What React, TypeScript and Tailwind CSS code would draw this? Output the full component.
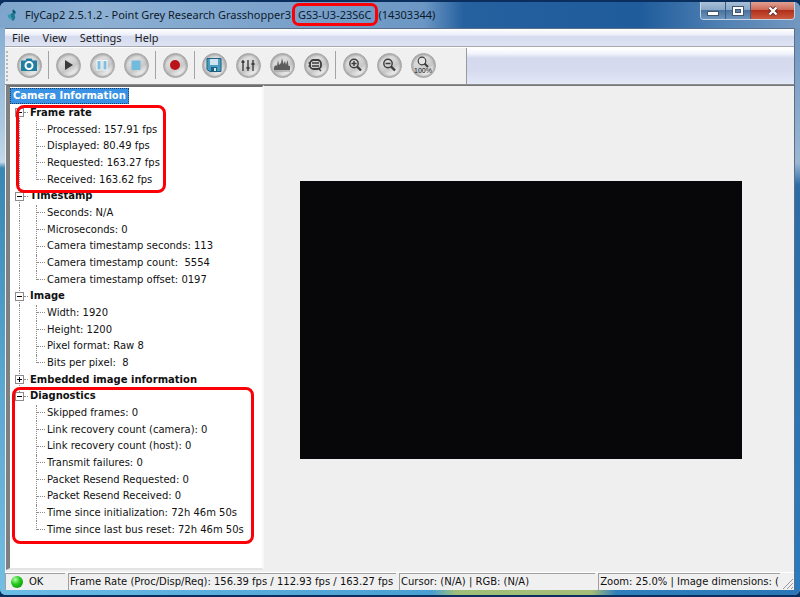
import type { ReactNode } from 'react';

interface TreeGroup {
  label: string;
  collapsed?: boolean;
  items: string[];
}

const groups: TreeGroup[] = [
  {
    label: 'Frame rate',
    items: ['Processed: 157.91 fps', 'Displayed: 80.49 fps', 'Requested: 163.27 fps', 'Received: 163.62 fps'],
  },
  {
    label: 'Timestamp',
    items: [
      'Seconds: N/A',
      'Microseconds: 0',
      'Camera timestamp seconds: 113',
      'Camera timestamp count:  5554',
      'Camera timestamp offset: 0197',
    ],
  },
  {
    label: 'Image',
    items: ['Width: 1920', 'Height: 1200', 'Pixel format: Raw 8', 'Bits per pixel:  8'],
  },
  { label: 'Embedded image information', collapsed: true, items: [] },
  {
    label: 'Diagnostics',
    items: [
      'Skipped frames: 0',
      'Link recovery count (camera): 0',
      'Link recovery count (host): 0',
      'Transmit failures: 0',
      'Packet Resend Requested: 0',
      'Packet Resend Received: 0',
      'Time since initialization: 72h 46m 50s',
      'Time since last bus reset: 72h 46m 50s',
    ],
  },
];

function TitleBar() {
  return (
    <header className="flex h-[26px] shrink-0 items-start bg-[linear-gradient(90deg,#7fa5cc_0%,#8db0d3_12%,#7ba2cb_35%,#6c97c4_53%,#25609f_58%,#1f5c9c_80%,#4f80b3_90%,#7398c0_100%)] pl-[7px]">
      <div className="flex h-[26px] flex-1 items-center gap-[8px]">
        <svg viewBox="0 0 12 16" className="h-4 w-[10px] shrink-0">
          <path d="M8 1 6 3 7 5 4 7 4 10 6 12 5 14 8 15 10 11 9 8 11 5Z" fill="#1d7890" />
          <path d="M1 7 4 8 5 12 3 13 1 10Z" fill="#2f9bb5" />
          <path d="M7 2 10 4 8 6Z" fill="#153f5c" />
        </svg>
        <h1 className="font-['Noto_Sans',sans-serif] text-[11px] leading-4 whitespace-pre text-[#0c1a2c]">
          FlyCap2 2.5.1.2 - Point Grey Research Grasshopper3{' '}
          <span className="relative px-1">
            GS3-U3-23S6C
            <span className="absolute -inset-x-[2px] -inset-y-1 rounded-[7px] border-3 border-[#fb0007]" />
          </span>
          {' (14303344)'}
        </h1>
      </div>
      <div className="mr-[5px] flex h-[18px] overflow-hidden rounded-b-[4px] border border-t-0 border-[#c3d3e4]">
        <button
          aria-label="Minimize"
          className="flex w-[25px] items-center justify-center border-r border-[#3c5a7d] bg-[linear-gradient(#a9bfd7_0%,#8aa8c8_45%,#4a739f_50%,#6c96bf_100%)]"
        >
          <svg viewBox="0 0 12 8" className="mt-1 h-2 w-3">
            <rect x="0.5" y="2.5" width="11" height="4" fill="#fff" stroke="#44566c" />
          </svg>
        </button>
        <button
          aria-label="Maximize"
          className="flex w-[25px] items-center justify-center border-r border-[#3c5a7d] bg-[linear-gradient(#a9bfd7_0%,#8aa8c8_45%,#4a739f_50%,#6c96bf_100%)]"
        >
          <svg viewBox="0 0 12 10" className="h-[10px] w-3">
            <rect x="0.5" y="0.5" width="11" height="9" fill="#fff" stroke="#44566c" />
            <rect x="3.5" y="3.5" width="5" height="3" fill="#5d82aa" stroke="#44566c" />
          </svg>
        </button>
        <button
          aria-label="Close"
          className="flex w-[43px] items-center justify-center bg-[linear-gradient(#e0a193_0%,#cf6b58_45%,#b0301b_50%,#cc5a3f_100%)]"
        >
          <svg viewBox="0 0 12 10" className="h-[10px] w-3">
            <path d="M2.5 1.5 9.5 8.5M9.5 1.5 2.5 8.5" stroke="#5a2a2a" strokeWidth="4" />
            <path d="M2.5 1.5 9.5 8.5M9.5 1.5 2.5 8.5" stroke="#fff" strokeWidth="2.4" />
          </svg>
        </button>
      </div>
    </header>
  );
}

function MenuBar() {
  return (
    <nav className="flex h-[17px] shrink-0 items-center gap-[13px] bg-[linear-gradient(#ffffff_0%,#eceffa_35%,#d5dbee_45%,#dfe4f4_100%)] pl-[7px]">
      {['File', 'View', 'Settings', 'Help'].map((name) => (
        <button key={name} className="font-['Noto_Sans',sans-serif] text-[11px] leading-4 text-[#1a1a1a]">
          {name}
        </button>
      ))}
    </nav>
  );
}

function ToolButton({ label, children }: { label: string; children: ReactNode }) {
  return (
    <button aria-label={label} className="flex w-[34px] items-center justify-center">
      <span className="flex size-[25px] items-center justify-center rounded-full border border-[#a2a2a2] bg-[linear-gradient(150deg,#b4b4b4_0%,#dedede_30%,#c8c8c8_60%,#f0f0f0_80%,#c4c4c4_100%)] shadow-[inset_0_0_2px_1px_#a4a4a4]">
        <svg viewBox="0 0 20 20" className="size-5">
          {children}
        </svg>
      </span>
    </button>
  );
}

function ToolSeparator() {
  return (
    <div className="flex w-[5px] justify-center py-[3px]">
      <div className="w-px bg-[#a3a3a3]" />
    </div>
  );
}

function ToolBar() {
  return (
    <div className="flex h-[36px] shrink-0 bg-[#f0f0f0]">
      <div className="my-[3px] ml-px w-[6px] border-l-2 border-dotted border-[#b9b9b9]" />
      <div className="flex w-[454px] shrink-0 pb-[2px]">
        <ToolButton label="Take picture">
          <path d="M2 5.5h4.5l1-2h5l1 2H18V16H2Z" fill="#1f7fa3" />
          <circle cx="10" cy="10.5" r="3.5" fill="#1f7fa3" stroke="#fff" strokeWidth="2" />
        </ToolButton>
        <ToolSeparator />
        <ToolButton label="Play">
          <path d="M7 5 15 10 7 15Z" fill="#3a3a3a" />
        </ToolButton>
        <ToolButton label="Pause">
          <rect x="5" y="5.5" width="4" height="9.5" fill="#7fbfdd" stroke="#f4fafd" />
          <rect x="11" y="5.5" width="4" height="9.5" fill="#7fbfdd" stroke="#f4fafd" />
        </ToolButton>
        <ToolButton label="Stop">
          <rect x="5.5" y="5.5" width="9" height="9.5" fill="#72bbdd" />
        </ToolButton>
        <ToolSeparator />
        <ToolButton label="Record">
          <circle cx="10" cy="10" r="5" fill="#b9141a" />
        </ToolButton>
        <ToolSeparator />
        <ToolButton label="Save">
          <path d="M3 3.5h14v13h-11l-3-2Z" fill="#4a9cc0" stroke="#1d6283" />
          <rect x="6" y="4" width="8" height="6" fill="#cfe4ee" />
          <rect x="7" y="12" width="6" height="4" fill="#1d6283" />
          <rect x="10" y="13" width="2" height="3" fill="#d8e8f0" />
        </ToolButton>
        <ToolButton label="Camera control">
          <path d="M5 5v11M10 5v11M15 5v11" stroke="#3c3c3c" strokeWidth="1.4" />
          <path d="M3.5 7h3M8.5 13h3M13.5 9h3" stroke="#3c3c3c" strokeWidth="2.2" />
        </ToolButton>
        <ToolButton label="Histogram">
          <path d="M2 15V12L4 10 5 11 6 5 7 10 9 8 10 3 11.5 9 13 6 14 10 15.5 5 16.5 11 18 11V15Z" fill="#5c5c5c" />
          <path d="M2 16h16" stroke="#999" />
        </ToolButton>
        <ToolButton label="Event log">
          <rect x="4" y="5" width="11" height="9" rx="3.5" fill="none" stroke="#3c3c3c" strokeWidth="1.8" />
          <path d="M6 8h7M6 11h7M2.5 8H5M2.5 11H5M12 13l3 3" stroke="#3c3c3c" strokeWidth="1.4" />
        </ToolButton>
        <ToolSeparator />
        <ToolButton label="Zoom in">
          <circle cx="9" cy="8.5" r="4.2" fill="none" stroke="#3c3c3c" strokeWidth="1.4" />
          <path d="M6.5 8.5h5M9 6v5" stroke="#3c3c3c" strokeWidth="1.4" />
          <path d="m12 11.5 4 4" stroke="#3c3c3c" strokeWidth="2.4" />
        </ToolButton>
        <ToolButton label="Zoom out">
          <circle cx="9" cy="8.5" r="4.2" fill="none" stroke="#3c3c3c" strokeWidth="1.4" />
          <path d="M6.5 8.5h5" stroke="#3c3c3c" strokeWidth="1.4" />
          <path d="m12 11.5 4 4" stroke="#3c3c3c" strokeWidth="2.4" />
        </ToolButton>
        <ToolButton label="Zoom to 100%">
          <circle cx="9" cy="6" r="3.8" fill="#e4e4e4" stroke="#3c3c3c" strokeWidth="1.2" />
          <path d="m11.5 8.5 3.5 3.5" stroke="#3c3c3c" strokeWidth="2" />
          <text x="10" y="18" textAnchor="middle" fontFamily="Liberation Sans, sans-serif" fontSize="7" fill="#222">
            100%
          </text>
        </ToolButton>
      </div>
      <div className="flex-1 border-l border-[#9a9a9a] bg-[linear-gradient(#ffffff_0%,#f3f5fc_15%,#d4d9ed_28%,#d6dbef_65%,#e3e8f8_100%)]" />
    </div>
  );
}

function GroupRow({ group, first, last }: { group: TreeGroup; first: boolean; last: boolean }) {
  return (
    <li className="flex items-center">
      <span className="relative flex h-full w-[20px] shrink-0 items-center pl-[9px]">
        <span
          className={`w-[9px] border-l border-dotted border-[#8c8c8c] ${first ? 'h-1/2 self-end' : last ? 'h-1/2 self-start' : 'h-full'}`}
        />
        <button
          aria-label={group.collapsed ? `Expand ${group.label}` : `Collapse ${group.label}`}
          className="absolute left-[5px] flex size-[9px] items-center justify-center border border-[#8c8c8c] bg-white"
        >
          <svg viewBox="0 0 7 7" className="size-[7px]" stroke="#000">
            <path d={group.collapsed ? 'M1 3.5h5M3.5 1v5' : 'M1 3.5h5'} />
          </svg>
        </button>
        <span className="absolute left-[14px] w-[4px] border-t border-dotted border-[#8c8c8c]" />
      </span>
      <span className="font-bold">{group.label}</span>
    </li>
  );
}

function ItemRow({ text, trunk, last }: { text: string; trunk: boolean; last: boolean }) {
  return (
    <li className="flex items-center">
      <span className={`ml-[9px] h-full w-[17px] shrink-0 ${trunk ? 'border-l border-dotted border-[#8c8c8c]' : ''}`} />
      <span
        className={`w-px shrink-0 border-l border-dotted border-[#8c8c8c] ${last ? 'h-1/2 self-start' : 'h-full'}`}
      />
      <span className="mr-[2px] w-[8px] shrink-0 border-t border-dotted border-[#8c8c8c]" />
      <span className="whitespace-pre">{text}</span>
    </li>
  );
}

function CameraTree() {
  return (
    <aside className="relative ml-px w-[258px] shrink-0 border-t-2 border-r-2 border-b-2 border-l-4 border-t-[#6f6f6f] border-r-[#f8f8f8] border-b-[#e4e4e4] border-l-[#7f7f7f] bg-white pt-px">
      <ul className="grid h-[450px] auto-rows-fr font-['DejaVu_Sans',sans-serif] text-[10px] leading-4 text-[#111]">
        <li className="flex items-center">
          <span className="border border-dotted border-[#1b3f66] bg-[#3992e3] px-[2px] leading-[14px] font-bold text-white">
            Camera Information
          </span>
        </li>
        {groups.map((group, g) => [
          <GroupRow key={group.label} group={group} first={g === 0} last={g === groups.length - 1} />,
          ...group.items.map((text, i) => (
            <ItemRow key={text} text={text} trunk={g < groups.length - 1} last={i === group.items.length - 1} />
          )),
        ])}
      </ul>
      {/* highlight frames */}
      <div className="absolute top-[18px] left-[6px] h-[88px] w-[150px] rounded-[8px] border-3 border-[#fb0007]" />
      <div className="absolute top-[300px] left-[2px] h-[157px] w-[242px] rounded-[8px] border-3 border-[#fb0007]" />
    </aside>
  );
}

function StatusPane({ className, children }: { className: string; children: ReactNode }) {
  return (
    <div
      className={`flex items-center overflow-hidden border-t border-l border-[#a0a0a0] whitespace-nowrap ${className}`}
    >
      {children}
    </div>
  );
}

function StatusBar() {
  return (
    <footer className="flex h-[17px] shrink-0 gap-[3px] bg-[#f0f0f0] font-['DejaVu_Sans',sans-serif] text-[10px] leading-4 text-[#111]">
      <StatusPane className="w-[60px] gap-[6px] pl-[5px]">
        <span className="size-[12px] rounded-full bg-[radial-gradient(circle_at_35%_30%,#b6ffab_0%,#27cc1e_40%,#0a7d0a_100%)]" />
        OK
      </StatusPane>
      <StatusPane className="w-[328px] pl-px">Frame Rate (Proc/Disp/Req): 156.39 fps / 112.93 fps / 163.27 fps</StatusPane>
      <StatusPane className="flex-1 pl-px">Cursor: (N/A) | RGB: (N/A)</StatusPane>
      <div className="flex">
        <StatusPane className="px-px">Zoom: 25.0% | Image dimensions: (</StatusPane>
        <svg viewBox="0 0 14 14" className="size-[14px] self-end" stroke="#9a9a9a">
          <path d="M3 13 13 3M7 13l6-6M11 13l2-2" />
        </svg>
      </div>
    </footer>
  );
}

export default function App() {
  return (
    <div className="flex h-screen flex-col bg-[#0a2f5e] pt-[2px] pb-[2px]">
      <div className="flex min-h-0 flex-1 flex-col overflow-hidden rounded-[6px] bg-[linear-gradient(#7fa8ce_0%,#a8c6e0_20%,#c3d8ea_27%,#3985b3_28%,#5aa7d2_65%,#74bde3_100%)]">
        <TitleBar />
        <div className="flex min-h-0 flex-1">
          <div className="ml-[5px] flex min-w-0 flex-1 flex-col border-t border-r border-[#5b7088] bg-[#f0f0f0]">
            <MenuBar />
            <div className="h-[2px] shrink-0 border-t border-[#a7a7b0] bg-white" />
            <ToolBar />
            <div className="flex min-h-0 flex-1 border-t border-[#8d8d8d]">
              <CameraTree />
              <main className="flex min-w-0 flex-1 items-center justify-center border-t border-[#777] bg-[#efefef] pr-4 pb-4">
                <div className="h-[278px] w-[442px] bg-[#070709]" />
              </main>
            </div>
            <div className="h-[3px] shrink-0 border-b border-white" />
            <StatusBar />
          </div>
          <div className="w-[5px] shrink-0 bg-[linear-gradient(#6f95bf_0%,#9bb7d3_24%,#2f6ba5_28%,#2a7bbd_100%)]" />
        </div>
        <div className="h-[5px] shrink-0 bg-[linear-gradient(90deg,#6bbde6_0%,#4a9fd2_54%,#9fbf78_57%,#a5bd78_74%,#2f7fbd_77%,#2a76b6_100%)]" />
      </div>
    </div>
  );
}
